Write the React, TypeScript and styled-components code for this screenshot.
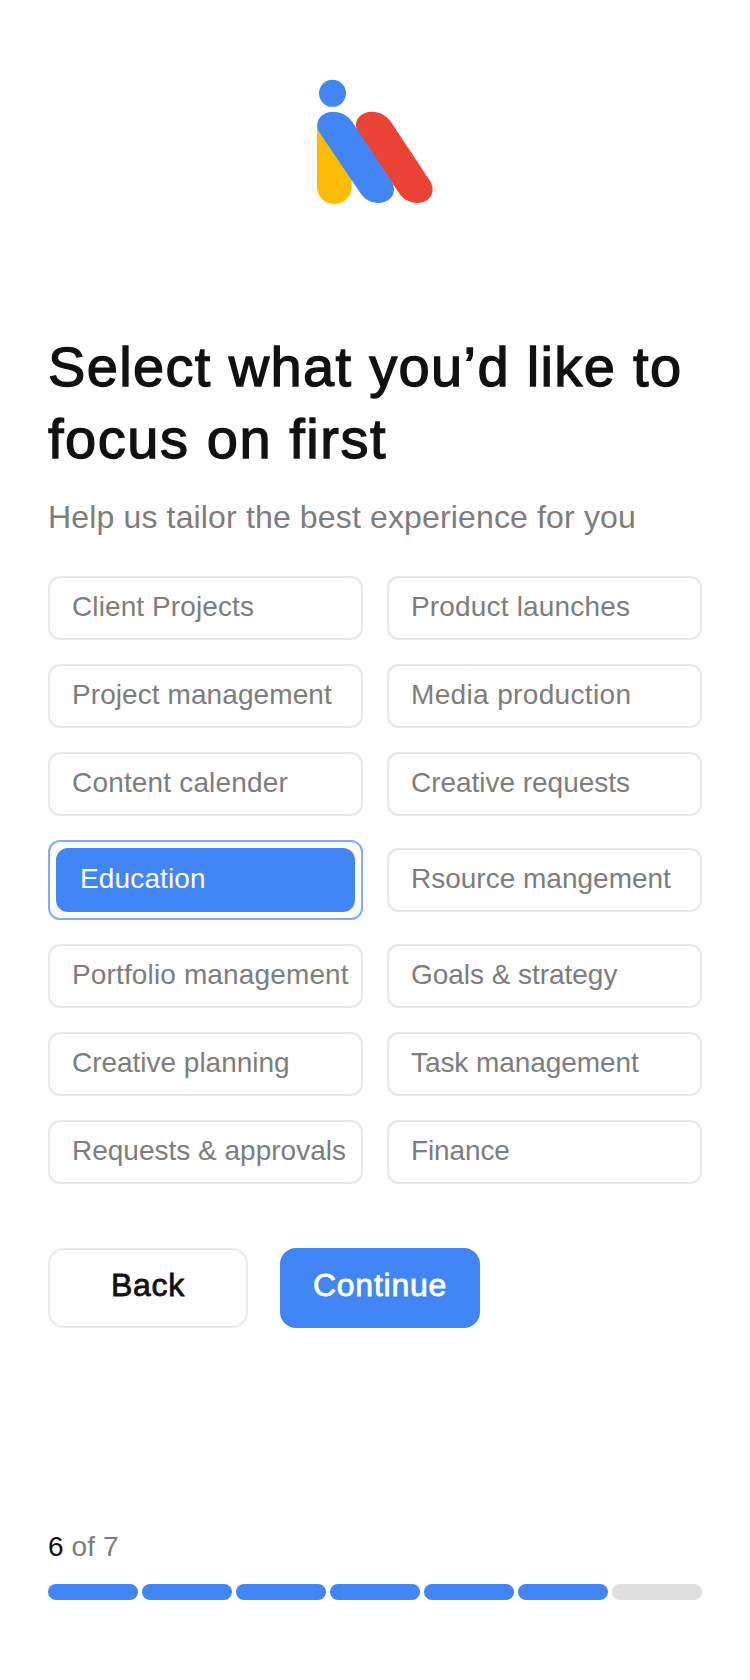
import React, { useState } from "react";
import styled, { createGlobalStyle, css } from "styled-components";

const GlobalStyle = createGlobalStyle`
  *, *::before, *::after { box-sizing: border-box; }
  body {
    margin: 0;
    background: #fff;
    color: #111;
    font-family: "Liberation Sans", Arial, Helvetica, sans-serif;
  }
`;

const Page = styled.main`
  display: flex;
  flex-direction: column;
  width: 750px;
  height: 1680px;
  padding: 65px 48px 80px;
  background: #fff;
`;

const Logo = styled.svg`
  display: block;
  align-self: center;
  width: 150px;
  height: 150px;
  flex: none;
`;

const Title = styled.h1`
  margin: 116px 0 0;
  font-size: 56px;
  font-weight: 400;
  line-height: 72px;
  white-space: nowrap;
  -webkit-text-stroke: 1.3px currentColor;
`;

const TitleLine = styled.span<{ $tracking: number }>`
  display: block;
  letter-spacing: ${({ $tracking }) => $tracking}px;
`;

const Subtitle = styled.p`
  margin: 22px 0 0;
  color: #7d7d7d;
  font-size: 32px;
  line-height: 40px;
  letter-spacing: 0.15px;
  white-space: nowrap;
`;

const Options = styled.div`
  display: grid;
  grid-template-columns: repeat(2, 315px);
  align-items: center;
  gap: 24px;
  margin-top: 39px;
`;

const OptionFrame = styled.div<{ $selected: boolean }>`
  ${({ $selected }) =>
    $selected &&
    css`
      padding: 6px;
      border: 2px solid #7fadf9;
      border-radius: 12px;
    `}
`;

const OptionButton = styled.button<{ $selected: boolean; $tracking: number }>`
  display: flex;
  align-items: flex-start;
  width: 100%;
  height: 64px;
  padding: 12px 0 0 22px;
  border: 2px solid ${({ $selected }) => ($selected ? "#4285f4" : "#e8e8e8")};
  border-radius: 12px;
  background: ${({ $selected }) => ($selected ? "#4285f4" : "#fff")};
  color: ${({ $selected }) => ($selected ? "#fff" : "#7d7d7d")};
  font: 400 28px/34px "Liberation Sans", Arial, sans-serif;
  letter-spacing: ${({ $tracking }) => $tracking}px;
  white-space: nowrap;
  cursor: pointer;
`;

const Actions = styled.div`
  display: flex;
  gap: 32px;
  margin-top: 64px;
`;

const ActionButton = styled.button<{ $primary?: boolean }>`
  display: flex;
  align-items: flex-start;
  justify-content: center;
  width: 200px;
  height: 80px;
  padding: 15px 0 0;
  border: 2px solid ${({ $primary }) => ($primary ? "#4285f4" : "#e8e8e8")};
  border-radius: 16px;
  background: ${({ $primary }) => ($primary ? "#4285f4" : "#fff")};
  color: ${({ $primary }) => ($primary ? "#fff" : "#111")};
  font: 400 32px/40px "Liberation Sans", Arial, sans-serif;
  letter-spacing: 0.75px;
  -webkit-text-stroke: 0.8px currentColor;
  cursor: pointer;
`;

const Footer = styled.footer`
  margin-top: auto;
`;

const StepLabel = styled.p`
  margin: 0 0 20px;
  color: #7d7d7d;
  font-size: 28px;
  line-height: 34px;
  letter-spacing: 0.1px;
`;

const CurrentStep = styled.span`
  color: #111;
`;

const Progress = styled.div`
  display: flex;
  gap: 4px;
`;

const Segment = styled.div<{ $done: boolean }>`
  flex: 1;
  height: 16px;
  border-radius: 8px;
  background: ${({ $done }) => ($done ? "#4285f4" : "#dfdfdf")};
`;

const OPTIONS = [
  { label: "Client Projects", tracking: 0.1 },
  { label: "Product launches", tracking: 0.17 },
  { label: "Project management", tracking: 0.08 },
  { label: "Media production", tracking: 0.35 },
  { label: "Content calender", tracking: 0.17 },
  { label: "Creative requests", tracking: -0.03 },
  { label: "Education", tracking: 0.14 },
  { label: "Rsource mangement", tracking: 0 },
  { label: "Portfolio management", tracking: 0.14 },
  { label: "Goals & strategy", tracking: -0.04 },
  { label: "Creative planning", tracking: -0.02 },
  { label: "Task management", tracking: -0.07 },
  { label: "Requests & approvals", tracking: 0 },
  { label: "Finance", tracking: -0.12 },
];

const TOTAL_STEPS = 7;
const CURRENT_STEP = 6;

export default function App() {
  const [selected, setSelected] = useState("Education");

  return (
    <>
      <GlobalStyle />
      <Page>
        <Logo viewBox="0 0 450 450" aria-hidden="true">
          <path fill="#fbbc05" d="M51 175V365C51 394 74 417 103 417S155 394 155 365V330Z" />
          <path
            fill="#ea4335"
            d="M176 204C170 195 168 187 168 179C168 157 189 140 215 140C239 140 260 151 273 171L390 348C395 356 398 365 398 374C398 397 377 414 351 414C329 414 310 403 297 384Z"
          />
          <path
            fill="#4285f4"
            d="M60 205C55 197 52 189 52 180C52 157 73 140 99 140C123 140 144 151 157 171L275 350C280 358 282 366 282 375C282 398 259 414 235 414C213 414 194 403 181 384Z"
          />
          <circle cx="97.5" cy="85" r="40.5" fill="#4285f4" />
        </Logo>

        <Title>
          <TitleLine $tracking={1.35}>Select what you’d like to</TitleLine>
          <TitleLine $tracking={1.55}>focus on first</TitleLine>
        </Title>
        <Subtitle>Help us tailor the best experience for you</Subtitle>

        <Options>
          {OPTIONS.map(({ label, tracking }) => (
            <OptionFrame key={label} $selected={label === selected}>
              <OptionButton
                type="button"
                $selected={label === selected}
                $tracking={tracking}
                aria-pressed={label === selected}
                onClick={() => setSelected(label)}
              >
                {label}
              </OptionButton>
            </OptionFrame>
          ))}
        </Options>

        <Actions>
          <ActionButton type="button">Back</ActionButton>
          <ActionButton type="button" $primary>
            Continue
          </ActionButton>
        </Actions>

        <Footer>
          <StepLabel>
            <CurrentStep>{CURRENT_STEP}</CurrentStep> of {TOTAL_STEPS}
          </StepLabel>
          <Progress>
            {Array.from({ length: TOTAL_STEPS }, (_, i) => (
              <Segment key={i} $done={i < CURRENT_STEP} />
            ))}
          </Progress>
        </Footer>
      </Page>
    </>
  );
}
